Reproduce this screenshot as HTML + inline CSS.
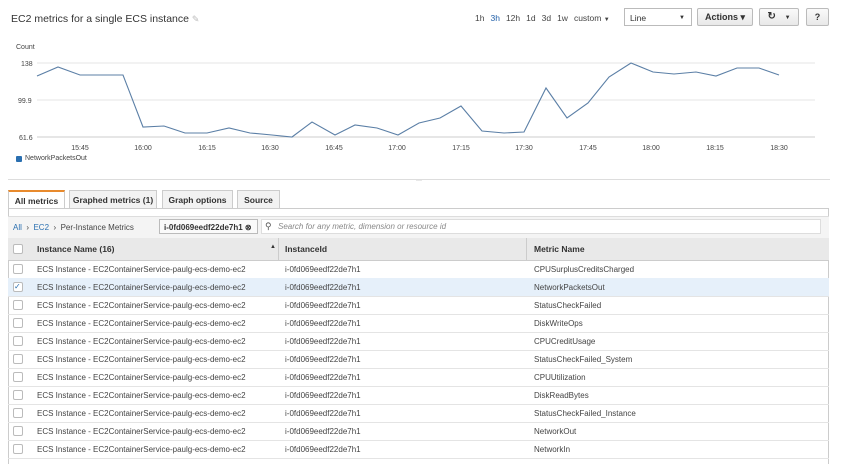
<!DOCTYPE html><html><head><style>
body{margin:0;width:847px;height:464px;background:#fff;font-family:"Liberation Sans",sans-serif;position:relative;overflow:hidden;color:#333}
.a{position:absolute;white-space:nowrap}
.btn{position:absolute;border:1px solid #bbb;border-radius:2px;background:linear-gradient(#fafafa,#e8e8e8);font-size:9px;font-weight:bold;text-align:center;box-sizing:border-box}
.row{position:absolute;left:8px;width:821px;height:18px;border-bottom:1px solid #e4e4e4;font-size:8px;color:#444}
.row span{position:absolute;top:5px}
.cb{position:absolute;left:5px;top:4px;width:8px;height:8px;border:1px solid #bbb;border-radius:2px;background:#fff}
.tab{position:absolute;top:190px;height:18px;border:1px solid #ccc;border-bottom:none;background:#f2f2f2;font-size:8.5px;font-weight:bold;text-align:center;line-height:18px;box-sizing:border-box}
</style></head><body>
<div class="a" style="left:11px;top:13px;font-size:10.5px;color:#333">EC2 metrics for a single ECS instance <span style="color:#bbb;font-size:9px">✎</span></div>
<div class="a" style="left:475px;top:13px;font-size:8.5px;color:#444"><span style="margin-right:6px">1h</span><span style="color:#1f5ea8;margin-right:6px">3h</span><span style="margin-right:6px">12h</span><span style="margin-right:6px">1d</span><span style="margin-right:6px">3d</span><span style="margin-right:6px">1w</span>custom <span style="font-size:6px">▼</span></div>
<div class="a" style="left:624px;top:8px;width:68px;height:18px;border:1px solid #bbb;font-size:8.5px;line-height:18px;padding-left:5px;box-sizing:border-box">Line<span style="position:absolute;right:6px;font-size:6px">▼</span></div>
<div class="btn" style="left:697px;top:8px;width:56px;height:18px;line-height:16px">Actions ▾</div>
<div class="btn" style="left:759px;top:8px;width:40px;height:18px;line-height:16px;font-size:10px">↻ <span style="font-size:6px;margin-left:6px">▼</span></div>
<div class="btn" style="left:806px;top:8px;width:23px;height:18px;line-height:16px">?</div>
<div class="a" style="left:16px;top:44px;font-size:7px;color:#444">Count</div>
<svg class="a" style="left:0;top:55px" width="847" height="100">
<g stroke="#e6e6e6"><line x1="37" y1="8" x2="815" y2="8"/><line x1="37" y1="45" x2="815" y2="45"/><line x1="37" y1="82" x2="815" y2="82" stroke="#ccc"/></g>
<g font-size="7" fill="#444" font-family="Liberation Sans"><text x="21" y="11">138</text><text x="18" y="48">99.9</text><text x="19" y="85">61.6</text>
<g text-anchor="middle"><text x="80" y="95">15:45</text><text x="143" y="95">16:00</text><text x="207" y="95">16:15</text><text x="270" y="95">16:30</text><text x="334" y="95">16:45</text><text x="397" y="95">17:00</text><text x="461" y="95">17:15</text><text x="524" y="95">17:30</text><text x="588" y="95">17:45</text><text x="651" y="95">18:00</text><text x="715" y="95">18:15</text><text x="779" y="95">18:30</text></g></g>
<polyline transform="translate(0,-55)" fill="none" stroke="#5b7fa6" stroke-width="1.1" points="37,76 58,67 80,75 123,75 143,127 164,126 185,133 207,133 229,128 250,133 272,135 292,137 312,122 335,135 355,125 377,128 398,135 419,123 440,118 461,106 482,131 504,133 524,132 546,88 567,118 588,103 609,77 631,63 653,72 674,74 696,72 716,76 737,68 759,68 779,75"/>
</svg>
<div class="a" style="left:16px;top:156px;width:6px;height:6px;background:#2a6fb0;border-radius:1px"></div>
<div class="a" style="left:25px;top:155px;font-size:7px;color:#444">NetworkPacketsOut</div>
<div class="a" style="left:8px;top:179px;width:822px;border-top:1px solid #ddd"></div>
<div class="a" style="left:416px;top:178px;font-size:6px;color:#888">···</div>
<div class="tab" style="left:8px;width:57px;background:#fff;border-top:2px solid #e88a2d;height:19px">All metrics</div>
<div class="tab" style="left:69px;width:88px">Graphed metrics (1)</div>
<div class="tab" style="left:162px;width:71px">Graph options</div>
<div class="tab" style="left:237px;width:43px">Source</div>
<div class="a" style="left:8px;top:208px;width:821px;height:256px;border:1px solid #ccc;border-bottom:none;box-sizing:border-box"></div>
<div class="a" style="left:8px;top:216px;width:821px;height:22px;background:#f4f4f4;border-top:1px solid #ddd"></div>
<div class="a" style="left:13px;top:223px;font-size:8px;color:#444"><span style="color:#2a6fb0">All</span> &nbsp;› &nbsp;<span style="color:#2a6fb0">EC2</span> &nbsp;› &nbsp;Per-Instance Metrics</div>
<div class="a" style="left:159px;top:219px;width:99px;height:15px;border:1px solid #bbb;background:#fafafa;font-size:8px;font-weight:bold;line-height:15px;padding-left:4px;box-sizing:border-box">i-0fd069eedf22de7h1 ⊗</div>
<div class="a" style="left:261px;top:219px;width:560px;height:15px;background:#fff;border:1px solid #ddd;font-size:8px;font-style:italic;color:#888;line-height:14px;padding-left:16px;box-sizing:border-box">Search for any metric, dimension or resource id</div>
<div class="a" style="left:265px;top:221px;font-size:9px;color:#555">⚲</div>
<div class="a" style="left:8px;top:238px;width:821px;height:22px;background:#e9e9e9;border-bottom:1px solid #ccc;font-size:8.5px;font-weight:bold;color:#333">
<div class="cb" style="top:6px"></div><span class="a" style="left:29px;top:6px">Instance Name (16)</span><span class="a" style="left:262px;top:6px;font-size:6px">▲</span>
<div class="a" style="left:270px;top:0;height:22px;border-left:1px solid #ccc"></div><span class="a" style="left:277px;top:6px">InstanceId</span>
<div class="a" style="left:518px;top:0;height:22px;border-left:1px solid #ccc"></div><span class="a" style="left:526px;top:6px">Metric Name</span></div>
<div class="row" style="top:260px"><div class="cb"></div><span style="left:29px">ECS Instance - EC2ContainerService-paulg-ecs-demo-ec2</span><span style="left:277px">i-0fd069eedf22de7h1</span><span style="left:526px">CPUSurplusCreditsCharged</span></div>
<div class="row" style="top:278px;background:#e6f0fa"><div class="cb" style="font-size:8px;line-height:8px;color:#2a6fb0">✓</div><span style="left:29px">ECS Instance - EC2ContainerService-paulg-ecs-demo-ec2</span><span style="left:277px">i-0fd069eedf22de7h1</span><span style="left:526px">NetworkPacketsOut</span></div>
<div class="row" style="top:296px"><div class="cb"></div><span style="left:29px">ECS Instance - EC2ContainerService-paulg-ecs-demo-ec2</span><span style="left:277px">i-0fd069eedf22de7h1</span><span style="left:526px">StatusCheckFailed</span></div>
<div class="row" style="top:314px"><div class="cb"></div><span style="left:29px">ECS Instance - EC2ContainerService-paulg-ecs-demo-ec2</span><span style="left:277px">i-0fd069eedf22de7h1</span><span style="left:526px">DiskWriteOps</span></div>
<div class="row" style="top:332px"><div class="cb"></div><span style="left:29px">ECS Instance - EC2ContainerService-paulg-ecs-demo-ec2</span><span style="left:277px">i-0fd069eedf22de7h1</span><span style="left:526px">CPUCreditUsage</span></div>
<div class="row" style="top:350px"><div class="cb"></div><span style="left:29px">ECS Instance - EC2ContainerService-paulg-ecs-demo-ec2</span><span style="left:277px">i-0fd069eedf22de7h1</span><span style="left:526px">StatusCheckFailed_System</span></div>
<div class="row" style="top:368px"><div class="cb"></div><span style="left:29px">ECS Instance - EC2ContainerService-paulg-ecs-demo-ec2</span><span style="left:277px">i-0fd069eedf22de7h1</span><span style="left:526px">CPUUtilization</span></div>
<div class="row" style="top:386px"><div class="cb"></div><span style="left:29px">ECS Instance - EC2ContainerService-paulg-ecs-demo-ec2</span><span style="left:277px">i-0fd069eedf22de7h1</span><span style="left:526px">DiskReadBytes</span></div>
<div class="row" style="top:404px"><div class="cb"></div><span style="left:29px">ECS Instance - EC2ContainerService-paulg-ecs-demo-ec2</span><span style="left:277px">i-0fd069eedf22de7h1</span><span style="left:526px">StatusCheckFailed_Instance</span></div>
<div class="row" style="top:422px"><div class="cb"></div><span style="left:29px">ECS Instance - EC2ContainerService-paulg-ecs-demo-ec2</span><span style="left:277px">i-0fd069eedf22de7h1</span><span style="left:526px">NetworkOut</span></div>
<div class="row" style="top:440px"><div class="cb"></div><span style="left:29px">ECS Instance - EC2ContainerService-paulg-ecs-demo-ec2</span><span style="left:277px">i-0fd069eedf22de7h1</span><span style="left:526px">NetworkIn</span></div>
</body></html>
